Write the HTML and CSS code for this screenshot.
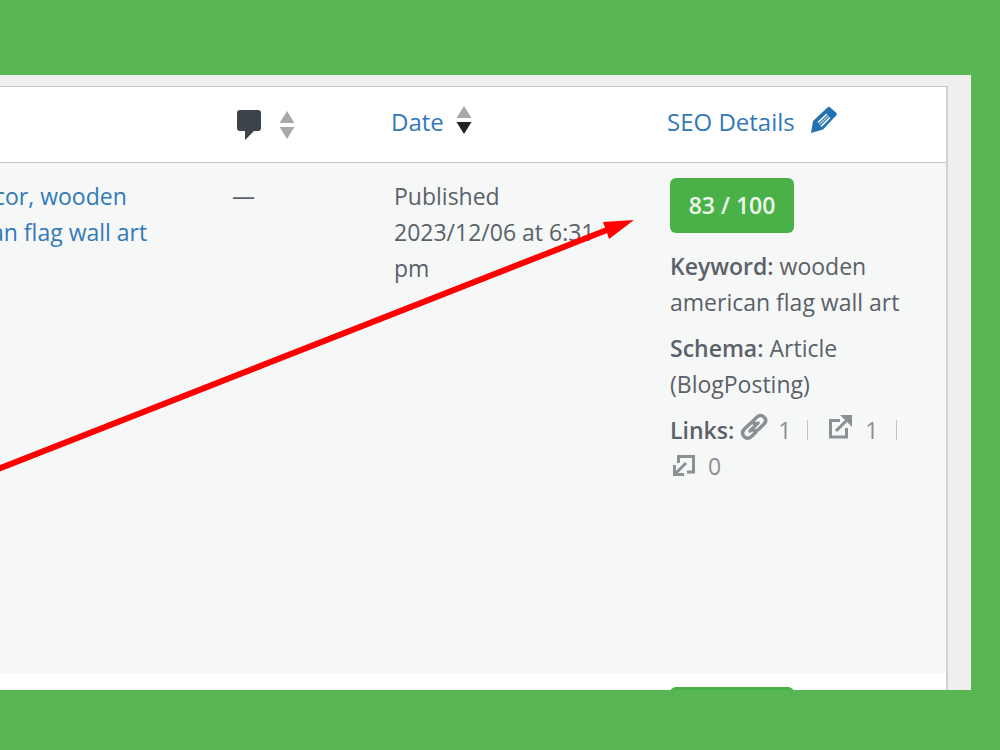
FILE: index.html
```html
<!DOCTYPE html>
<html lang="en">
<head>
<meta charset="utf-8">
<title>Posts</title>
<link rel="stylesheet" href="styles.css">
</head>
<body>
<main class="panel">
  <table class="posts">
    <colgroup><col class="col-title"><col class="col-comments"><col class="col-date"><col></colgroup>
    <thead>
      <tr>
        <th></th>
        <th>
          <a class="sort sort-comments" href="#" aria-label="Comments">
            <svg width="26" height="30" viewBox="0 0 26 30"><path fill="#3c434a" d="M4 0h18q3 0 3 3v15q0 3-3 3h-4l-9 9v-9H4q-3 0-3-3V3q0-3 3-3z"/></svg>
            <svg width="16" height="28" viewBox="0 0 16 28"><path fill="#a7aaad" d="M8 0l7.500 12H.5zM.5 16h15L8 28z"/></svg>
          </a>
        </th>
        <th>
          <a class="sort" href="#">Date
            <svg width="16" height="28" viewBox="0 0 16 28"><path fill="#a7aaad" d="M8 0l7.500 12H.5z"/><path fill="#1d2327" d="M.5 16h15L8 28z"/></svg>
          </a>
        </th>
        <th>
          <a class="sort sort-seo" href="#">SEO Details
            <svg width="28" height="28" viewBox="0 0 28 28"><path fill="#2271b1" d="M17.500 1.500q1.200-1.200 2.500-.2l6.200 5.500q1.300 1.200.2 2.400L13 23.500 1 27l2-12z"/><path stroke="#fff" stroke-width="1.500" d="M8 16.500L17 8M11 20.500L20 11.500"/><path stroke="#a9c8e2" stroke-width="1.500" d="M9.500 18.500L18.500 9.700"/></svg>
          </a>
        </th>
      </tr>
    </thead>
    <tbody>
      <tr class="post">
        <td class="title"><a href="#"><span class="line line-first">cor, wooden</span><span class="line">an flag wall art</span></a></td>
        <td class="comments">—</td>
        <td class="date">Published<br>2023/12/06 at 6:31 pm</td>
        <td class="seo">
          <span class="score">83 / 100</span>
          <p><b>Keyword:</b> wooden american flag wall art</p>
          <p><b>Schema:</b> Article (BlogPosting)</p>
          <div class="links">
            <b>Links:</b>
            <span class="count count-first"><svg width="30" height="30" viewBox="0 0 30 30" fill="none" stroke="#8c8f94" stroke-width="3.500" stroke-linecap="round"><path d="M13 10l5-5q3.500-3 7 0 3.500 3.500 0 7l-5 5q-3 3-6 1M17 20l-4.500 4.500q-4 3.500-7.500 0-3-3.500 0-7l5-5q3-3 6-1M11 19l8-8"/></svg>1</span>
            <span class="count"><svg width="26" height="26" viewBox="0 0 26 26"><path fill="none" stroke="#8c8f94" stroke-width="3" d="M13 6.500H3.500V23h16v-9M9 17L20 6"/><path fill="#8c8f94" d="M13 1h12v12l-3.500-3.500-5-5z"/></svg>1</span>
            <span class="count count-last"><svg width="26" height="26" viewBox="0 0 26 26"><path fill="none" stroke="#8c8f94" stroke-width="3" d="M8.500 11V4.500h15V20H17M5 22L16 11M4.500 13v9.500H14"/></svg>0</span>
          </div>
        </td>
      </tr>
      <tr class="next">
        <td></td><td></td><td></td>
        <td class="seo"><span class="score"></span></td>
      </tr>
    </tbody>
  </table>
  <svg class="arrow" width="636" height="270" viewBox="0 0 636 270"><path d="M-12 263L612 18" stroke="#fe0000" stroke-width="6"/><path fill="#fe0000" d="M634 10l-31 2 3 8 3 9z"/></svg>
</main>
</body>
</html>
```
FILE: styles.css
```css
* { box-sizing: border-box; }
body {
  margin: 0;
  height: 100vh;
  padding: 75px 29px 60px 0;
  background: #59b753;
  color: #5b6168;
  font: 23px/36px "Open Sans", "Noto Sans", sans-serif;
}
.panel {
  position: relative;
  height: 100%;
  overflow: hidden;
  padding: 11px 23px 0 0;
  background: #efefef;
}
.posts {
  width: calc(100% + 10px);
  margin-left: -10px;
  table-layout: fixed;
  border-collapse: separate;
  border-spacing: 0;
  border: 1px solid #c3c4c7;
  border-right: 2px solid #d0d1d3;
  background: #fff;
}
.col-title { width: 241px; }
.col-comments { width: 159px; }
.col-date { width: 276px; }
th {
  height: 76px;
  padding: 0 0 6px;
  border-bottom: 1px solid #c3c4c7;
  font-weight: 400;
  font-size: 24px;
  text-align: left;
}
td { padding: 0; vertical-align: top; }
a { color: #3379b8; text-decoration: none; }
.sort { display: flex; align-items: center; gap: 12px; }
.sort svg { margin-bottom: 3px; }
.sort-comments { gap: 17px; padding: 10px 0 0 4px; }
.sort-seo { gap: 15px; }
.post { height: 510px; background: #f6f7f7; }
.post td { padding-top: 15px; }
.line { display: block; white-space: nowrap; }
.line-first { padding-left: 3px; }
.post .date { padding-left: 3px; padding-right: 60px; }
.seo { padding-left: 3px; padding-right: 25px; }
.score {
  display: block;
  width: 124px;
  height: 55px;
  border-radius: 6px;
  background: #4ab148;
  color: #edf7ed;
  font-weight: 600;
  line-height: 55px;
  text-align: center;
}
p { margin: 0 0 10px; }
.score + p { margin-top: 15px; }
b { font-weight: 600; }
.links { display: flex; flex-wrap: wrap; align-items: center; column-gap: 5px; }
.count { display: flex; align-items: center; gap: 12px; color: #8c8f94; }
.count-first { gap: 9px; }
.count svg { margin-bottom: 6px; }
.count-last svg { margin-bottom: 2px; }
.count:not(.count-last)::after { content: ""; width: 1px; height: 20px; margin-left: 5px; margin-right: 14px; background: #c3c4c7; }
.count-first:not(.count-last)::after { margin-left: 7px; }
.next td { height: 70px; padding-top: 14px; }
.arrow { position: absolute; left: 0; top: 135px; }
```
